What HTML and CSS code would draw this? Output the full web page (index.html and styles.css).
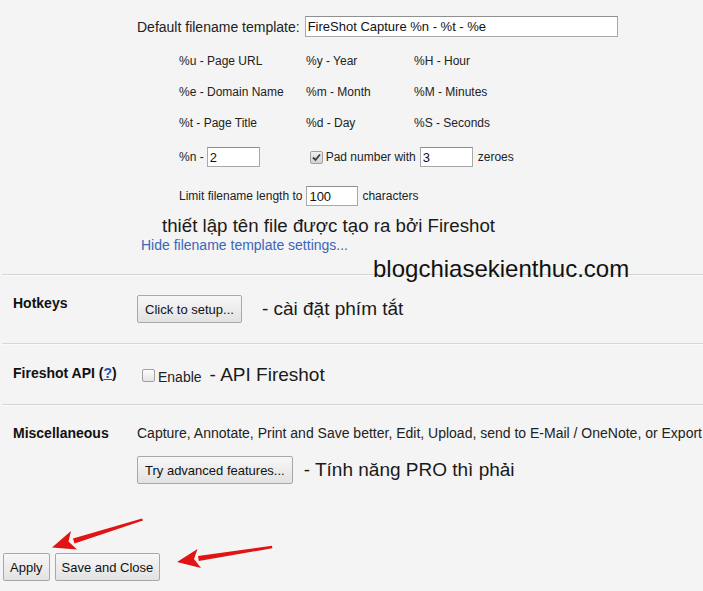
FILE: index.html
```html
<!DOCTYPE html>
<html lang="vi">
<head>
  <meta charset="UTF-8" />
  <meta name="viewport" content="width=device-width, initial-scale=1.0"/>
  <title>FireShot Options</title>
  <link rel="stylesheet" href="styles.css">
</head>
<body>

  <div class="filename-section">
    <div class="template-row">
      <span>Default filename template:</span>
      <input type="text" class="template-input" value="FireShot Capture %n - %t - %e" />
    </div>

    <div class="legend">
      <span>%u - Page URL</span>
      <span>%y - Year</span>
      <span>%H - Hour</span>
      <span>%e - Domain Name</span>
      <span>%m - Month</span>
      <span>%M - Minutes</span>
      <span>%t - Page Title</span>
      <span>%d - Day</span>
      <span>%S - Seconds</span>
    </div>

    <div class="small-row counter-row">
      <span>%n -</span>
      <input type="text" class="num-input n-input" value="2" />
      <span class="checkbox checked pad-check">
        <svg width="9" height="9" viewBox="0 0 9 9"><path d="M1 4.5 L3.5 7 L8 1.5" fill="none" stroke="#3c3c3c" stroke-width="1.8"/></svg>
      </span>
      <span>Pad number with</span>
      <input type="text" class="num-input pad-input" value="3" />
      <span>zeroes</span>
    </div>

    <div class="small-row limit-row">
      <span>Limit filename length to</span>
      <input type="text" class="num-input limit-input" value="100" />
      <span>characters</span>
    </div>

    <div class="note caption">thiết lập tên file được tạo ra bởi Fireshot</div>
    <a class="hide-link" href="#">Hide filename template settings...</a>
  </div>

  <div class="divider">
    <span class="watermark">blogchiasekienthuc.com</span>
  </div>

  <div class="option-row hotkeys">
    <div class="label">Hotkeys</div>
    <div class="content inline">
      <button class="btn">Click to setup...</button>
      <span class="note">- cài đặt phím tắt</span>
    </div>
  </div>

  <div class="divider"></div>

  <div class="option-row api">
    <div class="label">Fireshot API (<a class="help" href="#">?</a>)</div>
    <div class="content inline">
      <span class="checkbox"></span>
      <span class="enable">Enable</span>
      <span class="note">- API Fireshot</span>
    </div>
  </div>

  <div class="divider"></div>

  <div class="option-row misc">
    <div class="label">Miscellaneous</div>
    <div class="content">
      <div class="misc-text">Capture, Annotate, Print and Save better, Edit, Upload, send to E-Mail / OneNote, or Export</div>
      <div class="inline misc-actions">
        <button class="btn">Try advanced features...</button>
        <span class="note">- Tính năng PRO thì phải</span>
      </div>
    </div>
  </div>

  <div class="footer">
    <button class="btn btn-big">Apply</button>
    <button class="btn btn-big">Save and Close</button>
  </div>

  <!-- red annotation arrows drawn over the page -->
  <svg class="arrows" width="703" height="591" viewBox="0 0 703 591">
    <path d="M142 518.5 L73 538.5 L74.5 543.5 L143 520.5 Z" fill="#e01414"/>
    <polygon points="52,547.5 71,531 68.5,541.5 77,549.5" fill="#e01414"/>
    <path d="M272 545.8 L198 556 L198.8 561 L272.4 548.2 Z" fill="#e01414"/>
    <polygon points="177,562 197.5,549 194,559 201,568" fill="#e01414"/>
  </svg>

</body>
</html>
```

FILE: styles.css
```css
body {
  font-family: "Liberation Sans", Arial, sans-serif;
  font-size: 14px;
  color: #222;
  background: #f4f4f4;
  margin: 0;
  width: 703px;
  height: 591px;
  overflow: hidden;
  position: relative;
}

input[type="text"] {
  font-family: "Liberation Sans", Arial, sans-serif;
  font-size: 13px;
  color: #111;
  background: #fff;
  border: 1px solid #a9a9a9;
  border-top-color: #8f8f8f;
  padding: 0 2px;
  margin: 0;
  box-sizing: border-box;
  outline: none;
}

.filename-section {
  padding: 16px 0 0 137px;
}

.template-row {
  display: flex;
  align-items: center;
  height: 21px;
}

.template-input {
  width: 313px;
  height: 21px;
  margin-left: 5px !important;
}

.legend {
  display: grid;
  grid-template-columns: 127px 108px auto;
  grid-auto-rows: 31px;
  align-items: center;
  margin: 8px 0 0 42px;
  font-size: 12px;
}

.small-row {
  display: flex;
  align-items: center;
  height: 20px;
  margin-left: 42px;
  font-size: 12px;
}

.counter-row {
  margin-top: 9px;
}

.limit-row {
  margin-top: 19px;
}

.num-input {
  height: 20px;
  width: 53px;
}

.n-input {
  margin-left: 3px !important;
}

.pad-check {
  margin-left: 50px;
  margin-right: 3px;
}

.pad-input {
  margin: 0 5px 0 4px !important;
}

.limit-input {
  width: 52px;
  margin: 0 4px 0 4px !important;
}

.checkbox {
  display: inline-flex;
  align-items: center;
  justify-content: center;
  width: 11px;
  height: 11px;
  border: 1px solid #a0a0a0;
  border-radius: 2px;
  background: linear-gradient(#fcfcfc, #e4e4e4);
}

.checkbox.checked {
  background: linear-gradient(#f0f0f0, #d2d2d2);
}

.note {
  font-size: 19px;
  color: #1a1a1a;
}

.caption {
  margin: 9px 0 0 25px;
  font-size: 18.7px;
  line-height: 22px;
}

.hide-link {
  display: block;
  margin-left: 4px;
  line-height: 16px;
  color: #3a66b8;
  text-decoration: none;
}

.divider {
  position: relative;
  margin: 21px 0 0 2px;
  border-top: 1px solid #d6d6d6;
  border-bottom: 1px solid #fafafa;
}

.hotkeys + .divider,
.api + .divider {
  margin-top: 0;
}

.watermark {
  position: absolute;
  left: 371px;
  top: -20px;
  font-size: 24px;
  color: #111;
  white-space: nowrap;
}

.option-row {
  display: flex;
  align-items: flex-start;
}

.label {
  width: 124px;
  padding-left: 13px;
  font-weight: bold;
  color: #111;
  line-height: 15px;
  flex-shrink: 0;
}

.help {
  color: #2a52a8;
}

.inline {
  display: flex;
  align-items: center;
}

.hotkeys {
  padding: 19px 0 20px;
}

.hotkeys .label {
  margin-top: 1px;
}

.hotkeys .note {
  margin-left: 20px;
}

.api {
  padding: 20px 0 19px;
}

.api .label {
  margin-top: 1px;
}

.api .content {
  height: 20px;
}

.api .checkbox {
  margin-left: 5px;
}

.enable {
  margin: 3px 0 0 3px;
}

.api .note {
  margin-left: 8px;
}

.misc {
  padding-top: 20px;
}

.misc .content {
  white-space: nowrap;
  overflow: hidden;
}

.misc-text {
  line-height: 15px;
}

.misc-actions {
  margin-top: 15px;
}

.misc-actions .note {
  margin-left: 11px;
}

.btn {
  font-family: "Liberation Sans", Arial, sans-serif;
  font-size: 13px;
  color: #111;
  height: 28px;
  padding: 0 7px;
  border: 1px solid #a8a8a8;
  border-radius: 2px;
  background: linear-gradient(#f7f7f7, #e2e2e2);
  cursor: pointer;
}

.footer {
  display: flex;
  gap: 5px;
  margin: 69px 0 0 3px;
}

.btn-big {
  padding: 0 6px;
}

.arrows {
  position: absolute;
  left: 0;
  top: 0;
  pointer-events: none;
}
```
